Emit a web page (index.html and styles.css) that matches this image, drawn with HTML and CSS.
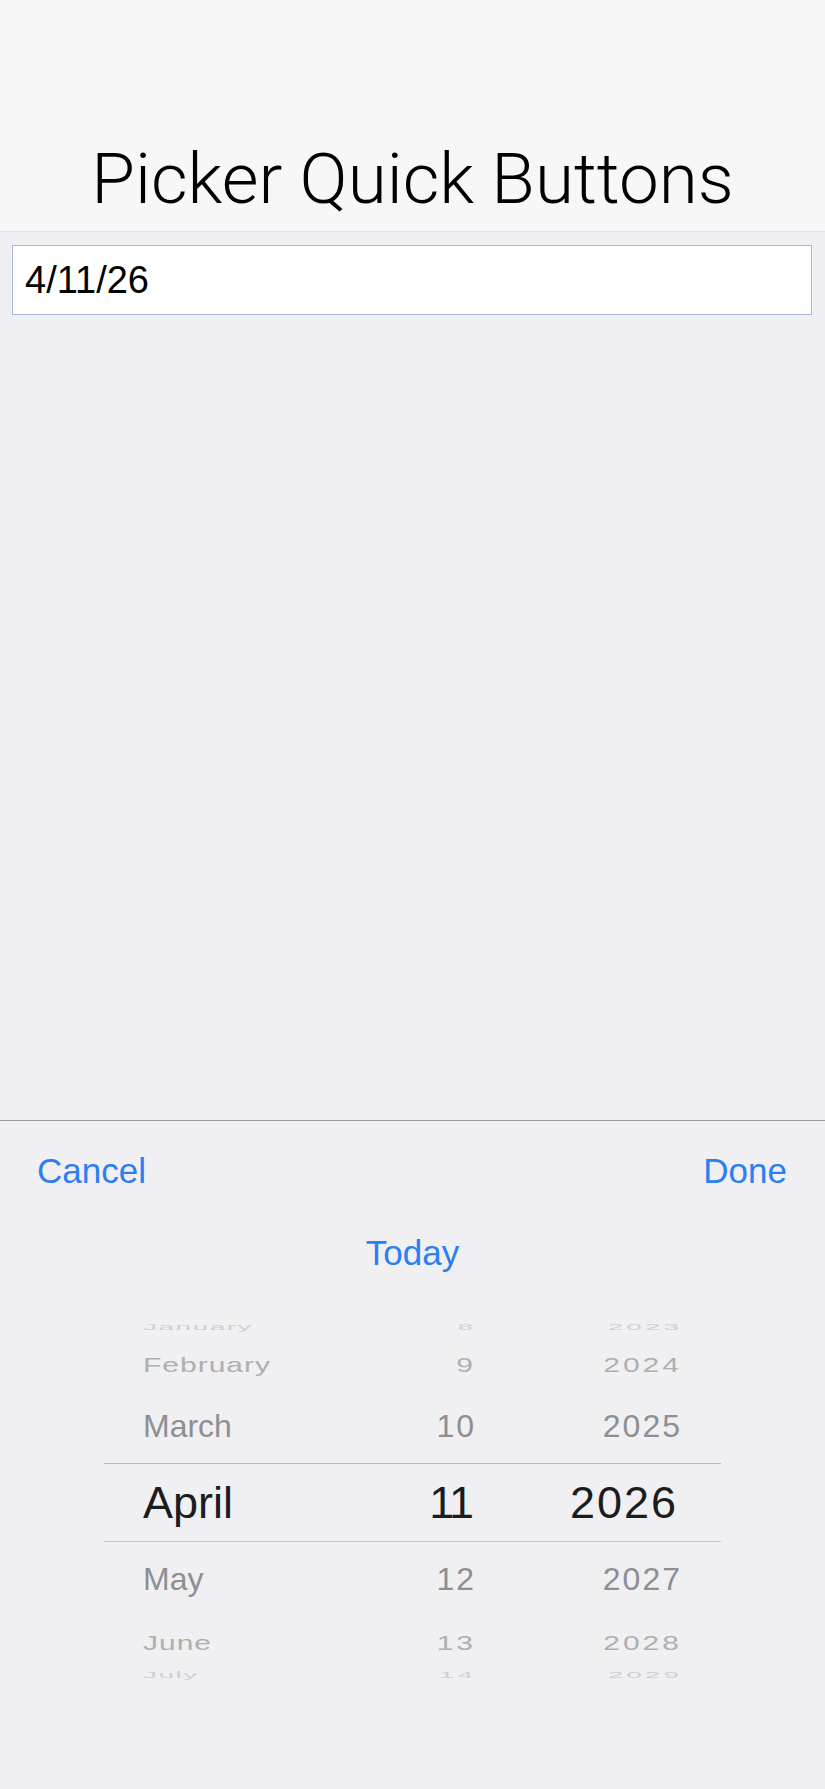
FILE: index.html
```html
<!DOCTYPE html>
<html lang="en">
<head>
  <meta charset="UTF-8">
  <meta name="viewport" content="width=device-width, initial-scale=1.0">
  <title>Picker Quick Buttons</title>
  <link rel="stylesheet" href="styles.css">
</head>
<body>
  <header class="nav-bar">
    <h1>Picker Quick Buttons</h1>
  </header>

  <main class="content">
    <input class="date-field" type="text" value="4/11/26" readonly>
  </main>

  <section class="sheet">
    <div class="toolbar">
      <button type="button" class="bar-btn">Cancel</button>
      <button type="button" class="bar-btn">Done</button>
    </div>
    <div class="quick-row">
      <button type="button" class="bar-btn">Today</button>
    </div>

    <div class="picker">
      <div class="row far"><span>January</span><span>8</span><span>2023</span></div>
      <div class="row near2"><span>February</span><span>9</span><span>2024</span></div>
      <div class="row near1 above"><span>March</span><span>10</span><span>2025</span></div>
      <div class="row selected"><span>April</span><span>11</span><span>2026</span></div>
      <div class="row near1"><span>May</span><span>12</span><span>2027</span></div>
      <div class="row near2 below"><span>June</span><span>13</span><span>2028</span></div>
      <div class="row far last"><span>July</span><span>14</span><span>2029</span></div>
    </div>
  </section>
</body>
</html>
```

FILE: styles.css
```css
body {
  margin: 0;
  height: 1789px;
  display: flex;
  flex-direction: column;
  background-color: #efeff4;
  font-family: "Liberation Sans", Arial, sans-serif;
  overflow: hidden;
}

.nav-bar {
  height: 231px;
  flex-shrink: 0;
  display: flex;
  align-items: flex-end;
  justify-content: center;
  background-color: #f7f7f7;
  border-bottom: 1px solid #e2e2e4;
}

.nav-bar h1 {
  margin: 0 0 17px;
  font-family: Roboto, "Liberation Sans", sans-serif;
  font-weight: 300;
  font-size: 71px;
  line-height: 1;
  color: #000;
}

.content {
  flex: 1;
  padding: 13px 13px 0 12px;
}

.date-field {
  display: block;
  width: 100%;
  height: 70px;
  box-sizing: border-box;
  padding: 0 12px;
  border: 1px solid #a9b8dc;
  background-color: #fff;
  font-family: "Liberation Sans", Arial, sans-serif;
  font-size: 38px;
  color: #000;
  outline: none;
}

.sheet {
  height: 668px;
  flex-shrink: 0;
  border-top: 1px solid #9d9d9f;
  background-color: #f0f0f2;
}

.bar-btn {
  padding: 0;
  border: none;
  background: none;
  font-family: "Liberation Sans", Arial, sans-serif;
  font-size: 35px;
  line-height: 35px;
  color: #2c7ef5;
  cursor: pointer;
}

.toolbar {
  display: flex;
  justify-content: space-between;
  padding: 32px 38px 0 37px;
}

.quick-row {
  display: flex;
  justify-content: center;
  margin-top: 47px;
}

.picker {
  margin-top: 51px;
  padding: 0 104px;
  height: 359px;
  overflow: hidden;
}

.row {
  display: grid;
  grid-template-columns: 200px 133px 1fr;
  align-items: center;
  padding: 0 39px;
  box-sizing: border-box;
}

.row span:nth-child(2),
.row span:nth-child(3) {
  text-align: right;
}

.row span {
  display: block;
  white-space: nowrap;
}

.far {
  height: 12px;
  font-size: 28px;
  line-height: 12px;
  letter-spacing: 1.5px;
  color: #cfcfd4;
}

.far span {
  transform: scaleY(0.3);
}

.far.last {
  height: 10px;
  line-height: 10px;
}

.near2 {
  height: 64px;
  font-size: 30px;
  line-height: 30px;
  letter-spacing: 1px;
  color: #aeaeb3;
}

.near2 span {
  transform: scaleY(0.7);
}

.near2.below {
  height: 54px;
}

.far span:nth-child(n+2),
.near2 span:nth-child(n+2) {
  letter-spacing: 3px;
}

.near1 {
  height: 74px;
  font-size: 32px;
  line-height: 32px;
  color: #8e8e93;
}

.near1 span:nth-child(n+2) {
  letter-spacing: 2px;
}

.near1.above {
  height: 66px;
  padding-bottom: 8px;
}

.selected {
  height: 79px;
  border-top: 1px solid #b9b9be;
  border-bottom: 1px solid #c6c6cb;
  font-size: 45px;
  line-height: 45px;
  color: #1c1c1e;
}

.selected span:nth-child(2) {
  padding-right: 4px;
  letter-spacing: -2px;
}

.selected span:nth-child(3) {
  padding-right: 4px;
  letter-spacing: 2px;
}
```
